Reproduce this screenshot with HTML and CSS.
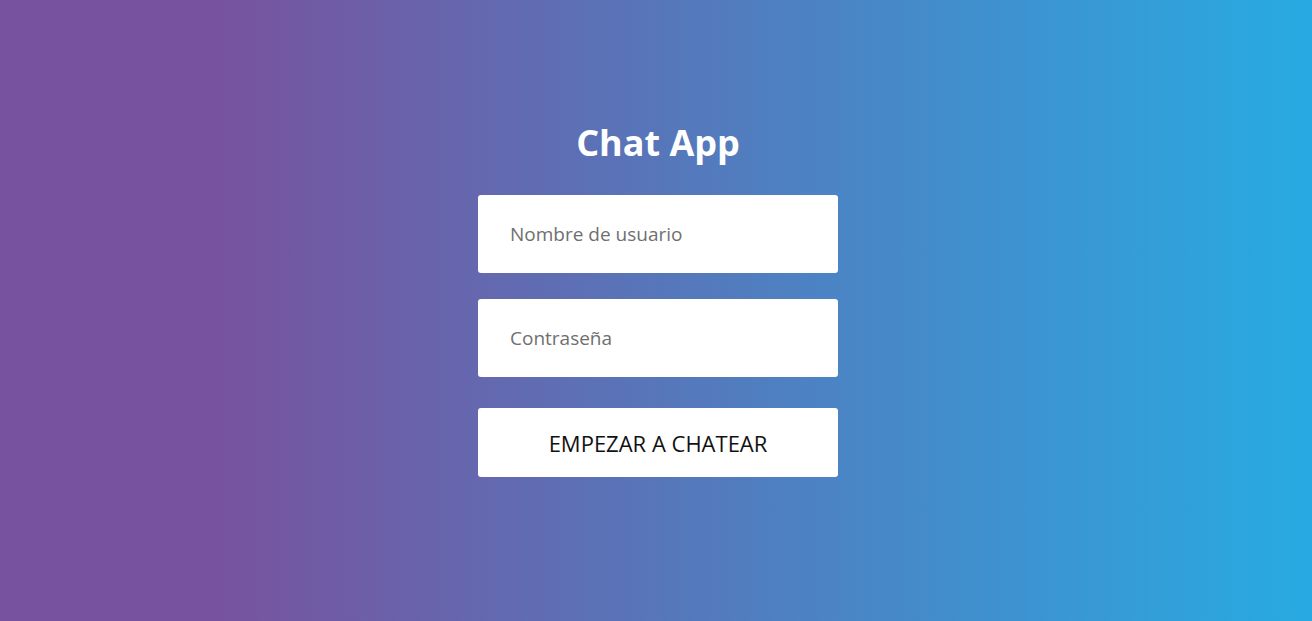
FILE: index.html
```html
<!DOCTYPE html>
<html lang="es">
<head>
<meta charset="utf-8">
<title>Chat App</title>
<link rel="stylesheet" href="styles.css">
</head>
<body>
<main class="page">
  <form class="login">
    <h1 class="title">Chat App</h1>
    <input class="field" type="text" placeholder="Nombre de usuario">
    <input class="field field-pass" type="password" placeholder="Contraseña">
    <button class="btn" type="button">EMPEZAR A CHATEAR</button>
  </form>
</main>
</body>
</html>
```
FILE: styles.css
```css
html, body {
  margin: 0;
  height: 100%;
}
body {
  background: linear-gradient(to right, #77539f 17%, #29a9e1 98.5%);
  font-family: "Open Sans", "Noto Sans", sans-serif;
}
.page {
  display: flex;
  justify-content: center;
  padding-top: 118px;
  padding-left: 4px;
}
.login {
  width: 360px;
  display: flex;
  flex-direction: column;
}
.title {
  margin: 0 0 27px;
  text-align: center;
  color: #fff;
  font-size: 36px;
  line-height: 50px;
  font-weight: 700;
}
.field {
  box-sizing: border-box;
  height: 78px;
  border: none;
  border-radius: 3px;
  background: #fff;
  padding: 0 32px;
  font-family: inherit;
  font-size: 19px;
  color: #333;
  outline: none;
}
.field::placeholder {
  color: #6f6f6f;
}
.field-pass {
  margin-top: 26px;
}
.btn {
  margin-top: 31px;
  height: 69px;
  border: none;
  border-radius: 3px;
  background: #fff;
  color: #111;
  font-family: inherit;
  font-size: 22px;
  cursor: pointer;
}
```
